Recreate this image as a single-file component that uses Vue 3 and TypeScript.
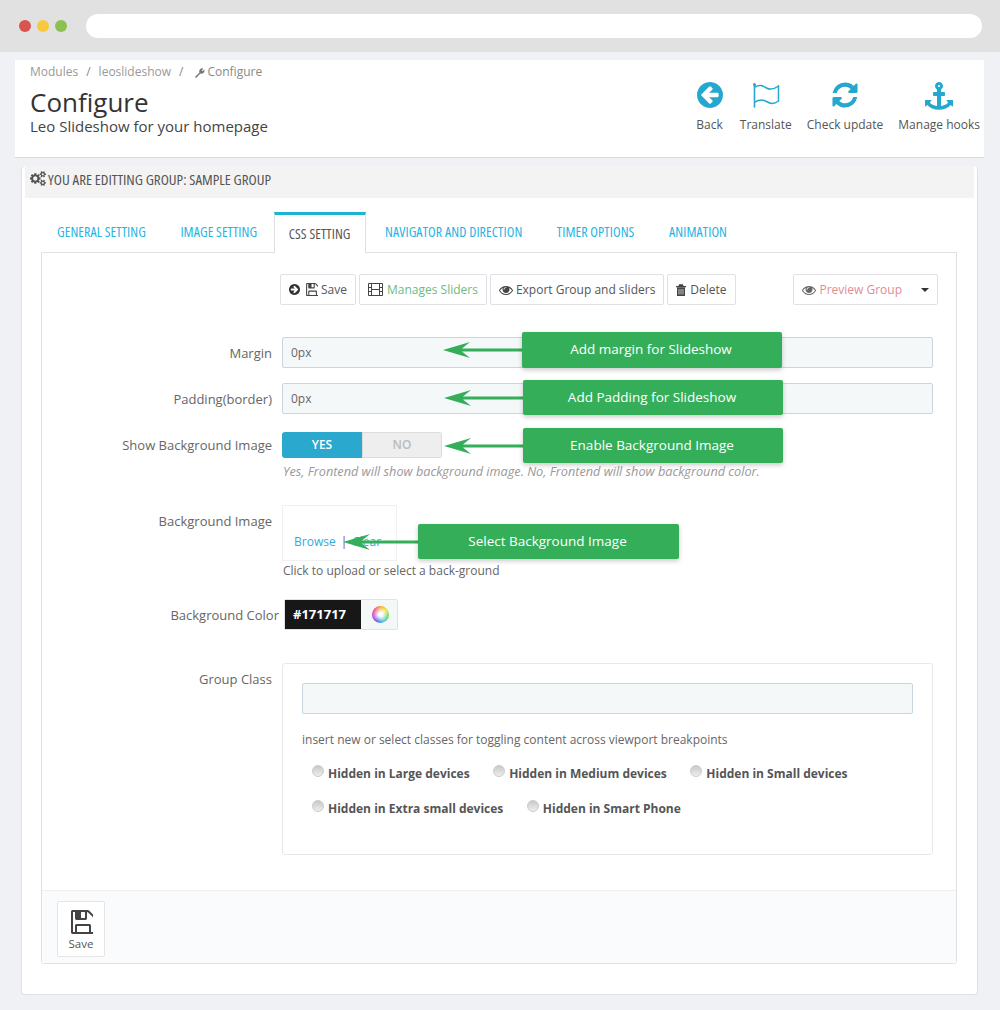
<script setup lang="ts">
interface Callout { text: string; x: number; y: number; w: number; h: number; tip: number }
const tabs = ['GENERAL SETTING', 'IMAGE SETTING', 'CSS SETTING', 'NAVIGATOR AND DIRECTION', 'TIMER OPTIONS', 'ANIMATION']
const callouts: Callout[] = [
  { text: 'Add margin for Slideshow', x: 522, y: 332, w: 260, h: 36, tip: 443 },
  { text: 'Add Padding for Slideshow', x: 523, y: 380, w: 260, h: 35, tip: 444 },
  { text: 'Enable Background Image', x: 523, y: 428, w: 260, h: 35, tip: 444 },
  { text: 'Select Background Image', x: 418, y: 524, w: 261, h: 35, tip: 343 },
]
const row1 = ['Hidden in Large devices', 'Hidden in Medium devices', 'Hidden in Small devices']
const row2 = ['Hidden in Extra small devices', 'Hidden in Smart Phone']
const floppy = 'M512 1536h768v-384h-768v384zm896 0h128v-896q0-14-10-38.500t-20-34.500l-281-281q-10-10-34-20t-39-10v416q0 40-28 68t-68 28h-576q-40 0-68-28t-28-68v-416h-128v1280h128v-416q0-40 28-68t68-28h832q40 0 68 28t28 68v416zm-384-928v-320q0-13-9.500-22.500t-22.500-9.500h-192q-13 0-22.500 9.500t-9.500 22.500v320q0 13 9.500 22.500t22.500 9.500h192q13 0 22.500-9.500t9.500-22.500zm640 32v928q0 40-28 68t-68 28h-1344q-40 0-68-28t-28-68v-1344q0-40 28-68t68-28h928q40 0 88 20t76 48l280 280q28 28 48 76t20 88z'
const eye = 'M1664 960q-152-236-381-353 61 104 61 225 0 185-131.500 316.500t-316.500 131.500-316.500-131.500-131.500-316.500q0-121 61-225-229 117-381 353 133 205 333.500 326.500t434.500 121.500 434.500-121.500 333.500-326.500zm-720-384q0-20-14-34t-34-14q-125 0-214.500 89.500t-89.500 214.500q0 20 14 34t34 14 34-14 14-34q0-86 61-147t147-61q20 0 34-14t14-34zm848 384q0 34-20 69-140 230-376.500 368.500t-499.500 138.500-499.500-139-376.500-368q-20-35-20-69t20-69q140-229 376.500-368t499.500-139 499.500 139 376.500 368q20 35 20 69z'
const arrowCircle = 'M1280 960v-128q0-26-19-45t-45-19h-502l189-189q19-19 19-45t-19-45l-91-91q-18-18-45-18t-45 18l-362 362-91 91q-18 18-18 45t18 45l91 91 362 362q18 18 45 18t45-18l91-91q18-18 18-45t-18-45l-189-189h502q26 0 45-19t19-45zm256-64q0 209-103 385.500t-279.500 279.500-385.500 103-385.500-103-279.500-279.500-103-385.500 103-385.500 279.500-279.500 385.500-103 385.500 103 279.500 279.500 103 385.500z'
const refresh = 'M1639 1056q0 5-1 7-64 268-268 434.500t-478 166.500q-146 0-282.500-55t-243.500-157l-129 129q-19 19-45 19t-45-19-19-45v-448q0-26 19-45t45-19h448q26 0 45 19t19 45-19 45l-137 137q71 66 161 102t187 36q134 0 250-65t186-179q11-17 53-117 8-23 30-23h192q13 0 22.500 9.500t9.500 22.500zm25-800v448q0 26-19 45t-45 19h-448q-26 0-45-19t-19-45 19-45l138-138q-148-137-349-137-134 0-250 65t-186 179q-11 17-53 117-8 23-30 23h-199q-13 0-22.500-9.500t-9.500-22.500v-7q65-268 270-434.500t480-166.500q146 0 284 55.500t245 156.500l130-129q19-19 45-19t45 19 19 45z'
const anchor = 'M960 256q0-26-19-45t-45-19-45 19-19 45 19 45 45 19 45-19 19-45zm832 928v352q0 22-20 30-8 2-12 2-12 0-23-9l-93-93q-119 143-318.500 226.500t-429.500 83.500-429.500-83.500-318.500-226.500l-93 93q-9 9-23 9-4 0-12-2-20-8-20-30v-352q0-14 9-23t23-9h352q22 0 30 20 8 19-7 35l-100 100q67 91 189.500 153.500t271.500 82.500v-647h-192q-26 0-45-19t-19-45v-128q0-26 19-45t45-19h192v-163q-58-34-93-92.500t-35-128.500q0-106 75-181t181-75 181 75 75 181q0 70-35 128.500t-93 92.500v163h192q26 0 45 19t19 45v128q0 26-19 45t-45 19h-192v647q149-20 271.500-82.500t189.500-153.500l-100-100q-15-16-7-35 8-20 30-20h352q14 0 23 9t9 23z'
const cogs = 'M832 896q0-106-75-181t-181-75-181 75-75 181 75 181 181 75 181-75 75-181zm768 512q0-52-38-90t-90-38-90 38-38 90q0 53 37.500 90.500t90.500 37.500 90.500-37.500 37.500-90.500zm0-1024q0-52-38-90t-90-38-90 38-38 90q0 53 37.500 90.500t90.500 37.500 90.500-37.500 37.500-90.500zm-384 421v185q0 10-7 19.500t-16 10.500l-155 24q-11 35-32 76 34 48 90 115 7 11 7 20 0 12-7 19-23 30-82.500 89.500t-78.500 59.500q-11 0-21-7l-115-90q-37 19-77 31-11 108-23 155-7 24-30 24h-186q-11 0-20-7.500t-10-17.500l-23-153q-34-10-75-31l-118 89q-7 7-20 7-11 0-21-8-144-133-144-160 0-9 7-19 10-14 41-53t47-61q-23-44-35-82l-152-24q-10-1-17-9.500t-7-19.500v-185q0-10 7-19.500t16-10.500l155-24q11-35 32-76-34-48-90-115-7-11-7-20 0-12 7-20 22-30 82-89t79-59q11 0 21 7l115 90q34-18 77-32 11-108 23-154 7-24 30-24h186q11 0 20 7.500t10 17.500l23 153q34 10 75 31l118-89q8-7 20-7 11 0 21 8 144 133 144 160 0 8-7 19-12 16-42 54t-45 60q23 48 34 82l152 23q10 2 17 10.500t7 19.500zm640 533v140q0 16-149 31-12 27-30 52 51 113 51 138 0 4-4 7-122 71-124 71-8 0-46-47t-52-68q-20 2-30 2t-30-2q-14 21-52 68t-46 47q-2 0-124-71-4-3-4-7 0-25 51-138-18-25-30-52-149-15-149-31v-140q0-16 149-31 13-29 30-52-51-113-51-138 0-4 4-7 4-2 35-20t59-34 30-16q8 0 46 46.500t52 67.500q20-2 30-2t30 2q51-71 92-112l6-2q4 0 124 70 4 3 4 7 0 25-51 138 17 23 30 52 149 15 149 31zm0-1024v140q0 16-149 31-12 27-30 52 51 113 51 138 0 4-4 7-122 71-124 71-8 0-46-47t-52-68q-20 2-30 2t-30-2q-14 21-52 68t-46 47q-2 0-124-71-4-3-4-7 0-25 51-138-18-25-30-52-149-15-149-31v-140q0-16 149-31 13-29 30-52-51-113-51-138 0-4 4-7 4-2 35-20t59-34 30-16q8 0 46 46.500t52 67.500q20-2 30-2t30 2q51-71 92-112l6-2q4 0 124 70 4 3 4 7 0 25-51 138 17 23 30 52 149 15 149 31z'
</script>

<template>
  <div class="page">
    <div class="chrome">
      <span class="dot red"></span><span class="dot yellow"></span><span class="dot green"></span>
      <div class="address"></div>
    </div>

    <header class="head">
      <div class="head-left">
        <div class="crumbs">
          <span>Modules</span><span class="sep">/</span><span>leoslideshow</span><span class="sep">/</span>
          <span class="crumb-last">
            <svg width="11" height="11" viewBox="0 0 12 12"><path d="M1 11 6 6a3.2 3.2 0 0 1 4.3-4.2L8.400 3.700l.9 1 1.900-1.900A3.200 3.200 0 0 1 7 7l-4.700 4.900z" fill="#777"/></svg>
            Configure
          </span>
        </div>
        <h1>Configure</h1>
        <p class="sub">Leo Slideshow for your homepage</p>
      </div>
      <nav class="actions">
        <a class="act back">
          <svg width="26" height="26" viewBox="0 128 1536 1536"><path :d="arrowCircle" fill="#25a7cf"/></svg>
          <span>Back</span>
        </a>
        <a class="act translate">
          <svg width="28" height="26" viewBox="0 0 28 26"><circle cx="2.500" cy="2.500" r="1.500" fill="#25a7cf"/><path d="M2.500 3v22" stroke="#25a7cf" stroke-width="1.600" stroke-linecap="round" fill="none"/><path d="M3 5C8 2 11 4 14.500 6S21 8 26.500 4V19C21 23 18 21.500 14.500 19.500S8 17 3 20" stroke="#25a7cf" stroke-width="1.500" fill="none"/></svg>
          <span>Translate</span>
        </a>
        <a class="act update">
          <svg width="30" height="26" viewBox="100 100 1592 1592"><path :d="refresh" fill="#25a7cf"/></svg>
          <span>Check update</span>
        </a>
        <a class="act hooks">
          <svg width="30" height="28" viewBox="0 0 1792 1792"><path :d="anchor" fill="#25a7cf"/></svg>
          <span>Manage hooks</span>
        </a>
      </nav>
    </header>

    <section class="panel">
      <div class="panel-head">
        <svg width="17" height="15" viewBox="0 0 1920 1792"><path :d="cogs" fill="#555"/></svg>
        <span class="cond big">YOU ARE EDITTING GROUP: SAMPLE GROUP</span>
      </div>

      <ul class="tabs">
        <li v-for="(t, i) in tabs" :key="t" class="tab" :class="{ active: i === 2 }"><span class="cond">{{ t }}</span></li>
      </ul>

      <div class="box">
        <div class="toolbar">
          <button class="btn">
            <svg class="flip" width="11" height="11" viewBox="0 128 1536 1536"><path :d="arrowCircle" fill="#333"/></svg>
            <svg class="ml" width="13" height="13" viewBox="0 128 1536 1536"><path :d="floppy" fill="#444"/></svg>
            Save
          </button>
          <button class="btn green-t">
            <svg width="15" height="13" viewBox="0 0 15 13"><path d="M.5.500h14v12H.500zM3.500.500v12M11.500.500v12M.5 4.500h3M.5 8.500h3M11.500 4.500h3M11.500 8.500h3M3.500 6.500h8" fill="none" stroke="#444" stroke-width="1"/></svg>
            Manages Sliders
          </button>
          <button class="btn">
            <svg width="14" height="14" viewBox="0 0 1792 1792"><path :d="eye" fill="#444"/></svg>
            Export Group and sliders
          </button>
          <button class="btn del">
            <svg width="10" height="12" viewBox="0 0 10 12"><path d="M0 2h10v1.200H0zM3 .3h4l.5 1.700h-5zM1 3.500h8V12H1z" fill="#444"/><path d="M3 5v5.500M5 5v5.500M7 5v5.500" stroke="#fff" stroke-width=".7"/></svg>
            Delete
          </button>
          <button class="btn preview">
            <svg width="14" height="14" viewBox="0 0 1792 1792"><path :d="eye" fill="#666"/></svg>
            <span class="pink">Preview Group</span>
            <span class="caret"></span>
          </button>
        </div>

        <div class="row r-margin">
          <label>Margin</label>
          <div class="input">0px</div>
        </div>
        <div class="row r-padding">
          <label>Padding(border)</label>
          <div class="input">0px</div>
        </div>
        <div class="row r-switch">
          <label>Show Background Image</label>
          <div>
            <div class="switch"><span class="yes">YES</span><span class="no">NO</span></div>
            <p class="help">Yes, Frontend will show background image. No, Frontend will show background color.</p>
          </div>
        </div>
        <div class="row r-image">
          <label>Background Image</label>
          <div>
            <div class="image-box"><a>Browse</a><i>|</i><a>Clear</a></div>
            <p class="upload">Click to upload or select a back-ground</p>
          </div>
        </div>
        <div class="row r-color">
          <label>Background Color</label>
          <div class="color">
            <span class="swatch">#171717</span>
            <span class="wheel-cell"><span class="wheel"></span></span>
          </div>
        </div>
        <div class="row r-class">
          <label>Group Class</label>
          <div class="class-box">
            <div class="class-input"></div>
            <p class="insert">insert new or select classes for toggling content across viewport breakpoints</p>
            <div class="radios first">
              <span v-for="r in row1" :key="r" class="radio"><span class="circle"></span>{{ r }}</span>
            </div>
            <div class="radios">
              <span v-for="r in row2" :key="r" class="radio"><span class="circle"></span>{{ r }}</span>
            </div>
          </div>
        </div>

        <footer class="foot">
          <button class="save">
            <svg width="24" height="24" viewBox="0 128 1536 1536"><path :d="floppy" fill="#444"/></svg>
            <span>Save</span>
          </button>
        </footer>
      </div>
    </section>

    <div v-for="c in callouts" :key="c.text" class="callout-wrap">
      <div class="callout" :style="{ left: c.x + 'px', top: c.y + 'px', width: c.w + 'px', height: c.h + 'px' }">{{ c.text }}</div>
      <svg class="arrow" :style="{ left: c.tip + 'px', top: c.y + c.h / 2 - 9 + 'px', width: c.x - c.tip + 'px' }" height="18" :viewBox="`0 0 ${c.x - c.tip} 18`">
        <path :d="`M0 9 L27 1 L19 7.500 H${c.x - c.tip} V10.500 H19 L27 17 Z`" fill="#35ae5a"/>
      </svg>
    </div>
  </div>
</template>

<style>
html, body { margin: 0; background: #eff1f4; }
</style>

<style scoped>
.page { position: relative; width: 1000px; height: 1010px; overflow: hidden; background: #eff1f4; font-family: "Open Sans", sans-serif; font-size: 13px; color: #666; }
.chrome { height: 52px; background: #e1e1e1; display: flex; align-items: center; padding-left: 19px; box-sizing: border-box; }
.dot { width: 12px; height: 12px; border-radius: 50%; margin-right: 6px; }
.red { background: #d9534f; } .yellow { background: #f7ca3e; } .green { background: #8cc152; }
.address { width: 896px; height: 24px; background: #fff; border-radius: 12px; margin-left: 13px; }

.head { margin: 8px 16px 0 15px; height: 97px; background: #fff; border-bottom: 1px solid #d9dbde; display: flex; justify-content: space-between; }
.head-left { padding: 4px 0 0 15px; }
.crumbs { font-size: 12px; color: #999; line-height: 16px; display: flex; }
.crumbs .sep { margin: 0 8px; color: #888; }
.crumb-last { margin-left: 3px; display: inline-flex; align-items: center; gap: 2px; color: #888; }
h1 { margin: 8px 0 0; font-size: 26px; font-weight: 400; color: #333; line-height: 28px; }
.sub { margin: 0; font-size: 15px; color: #444; line-height: 20px; }
.actions { display: flex; padding: 22px 4px 0 0; }
.act { display: flex; flex-direction: column; align-items: center; color: #555; font-size: 12px; height: 51px; justify-content: space-between; }
.act span { line-height: 16px; }
.back { margin-right: 17px; }
.translate { margin-right: 15px; }
.update { margin-right: 15px; }

.panel { margin: 8px 22px 0 21px; height: 829px; background: #fff; border: 1px solid #dfe1e4; border-top: 0; border-radius: 4px; box-sizing: border-box; padding: 0 3px; position: relative; }
.panel-head { height: 32px; background: #f3f3f3; display: flex; align-items: center; gap: 1px; padding: 0 0 7px 5px; box-sizing: border-box; color: #555; }
.cond { font-family: "Open Sans", sans-serif; font-stretch: 75%; font-size: 14px; letter-spacing: .1px; }
.cond.big { font-size: 15px; letter-spacing: 0; }
.tabs { list-style: none; margin: 14px 0 0 16px; padding: 0; display: flex; height: 41px; position: relative; z-index: 1; }
.tab { padding: 0 15px 0 16px; margin-right: 3.500px; line-height: 39px; color: #25b4e3; white-space: nowrap; }
.tab.active { background: #fff; color: #555; border: 1px solid #dfe1e4; border-top: 3px solid #1bb5d3; border-bottom: 0; height: 41px; line-height: 37px; box-sizing: border-box; padding: 0 14px; margin-left: -2px; }
.box { margin: -1px 0 0 16px; width: 916px; height: 712px; border: 1px solid #dfe1e4; box-sizing: border-box; border-radius: 0 0 3px 3px; position: relative; }

.toolbar { display: flex; gap: 3px; padding: 21px 18px 0 238px; height: 53px; box-sizing: border-box; }
.btn { height: 31px; border: 1px solid #dfe1e4; background: #fff; border-radius: 2px; padding: 0 8px; font: 12px "Open Sans", sans-serif; color: #555; display: inline-flex; align-items: center; gap: 3px; white-space: nowrap; }
.btn .ml { margin-left: 2px; }
.flip { transform: scaleX(-1); }
.green-t { color: #6dbb7f; gap: 4px; }
.del { padding: 0 8px; gap: 4px; }
.preview { margin-left: auto; padding: 0 8px; }
.pink { color: #e58a97; margin-right: 16px; }
.caret { border: 4px solid transparent; border-top-color: #333; border-bottom: 0; }

.row { display: grid; grid-template-columns: 230px 1fr; column-gap: 10px; }
.row label { text-align: right; line-height: 31px; height: 26px; font-size: 13px; color: #666; }
.r-margin { margin-top: 31px; padding-right: 23px; }
.r-padding { margin-top: 15px; padding-right: 23px; }
.r-margin label, .r-padding label, .r-color label { line-height: 33px; }
.r-switch { margin-top: 18px; }
.r-switch label { line-height: 26px; }
.r-image { margin-top: 26px; }
.r-image label { line-height: 32px; }
.r-color { margin-top: 19px; }
.r-color label { margin-right: -7px; }
.r-class { margin-top: 33px; padding-right: 23px; }
.r-class label { line-height: 32px; }
.input { height: 31px; border: 1px solid #c8d7dd; background: #f5f8f9; box-sizing: border-box; line-height: 29px; padding-left: 8px; font-size: 12px; color: #666; border-radius: 2px; }
.switch { width: 160px; height: 26px; display: flex; font-size: 12px; font-weight: 600; line-height: 26px; text-align: center; border-radius: 3px; overflow: hidden; }
.yes { width: 80px; background: #2aa8cd; color: #fff; }
.no { width: 80px; background: #eee; color: #bbb; box-shadow: inset 0 0 0 1px #dcdcdc; }
.help { margin: 5px 0 0 1px; font-size: 12.700px; font-style: italic; color: #999; line-height: 16px; white-space: nowrap; }
.image-box { width: 115px; height: 56px; border: 1px solid #f0f0f0; box-sizing: border-box; padding: 27px 0 0 11px; font-size: 12px; line-height: 18px; color: #33a9dd; display: flex; gap: 5px; }
.image-box i { font-style: normal; color: #8a4a6a; }
.upload { margin: 1px 0 0 1px; font-size: 12px; line-height: 18px; color: #666; white-space: nowrap; }
.color { display: flex; width: 114px; height: 31px; margin-left: 2px; border: 1px solid #dfe3e6; border-radius: 2px; box-sizing: border-box; }
.swatch { width: 76px; background: #171717; color: #fff; font-size: 13px; font-weight: 700; line-height: 29px; padding-left: 8px; box-sizing: border-box; }
.wheel-cell { flex: 1; background: #f5f8f9; display: flex; align-items: center; justify-content: center; padding-left: 2px; }
.wheel { width: 17px; height: 17px; border-radius: 50%; background: radial-gradient(circle, #fff 0 15%, transparent 70%), conic-gradient(#f5a623, #e8e337, #5fd35f, #35c7d8, #3f5de0, #c13fd8, #f0437a, #f5a623); }
.class-box { height: 192px; border: 1px solid #e6e9ec; border-radius: 3px; box-sizing: border-box; padding: 19px 19px 0; }
.class-input { height: 31px; background: #f5f8f9; border: 1px solid #c8d7dd; box-sizing: border-box; border-radius: 2px; }
.insert { margin: 17px 0 0; font-size: 12px; line-height: 18px; color: #666; white-space: nowrap; }
.radios { display: flex; margin: 17px 0 0 10px; gap: 23.500px; font-size: 12px; font-weight: 700; color: #555; line-height: 18px; }
.radios.first { margin-top: 16px; }
.radio { position: relative; padding-left: 16px; white-space: nowrap; }
.circle { position: absolute; left: 0; top: 0; width: 12px; height: 12px; border-radius: 50%; background: linear-gradient(#c8c8c8, #eee); border: 1px solid #ccc; box-sizing: border-box; }
.foot { position: absolute; left: 0; right: 0; bottom: 0; height: 73px; background: #fafbfc; border-top: 1px solid #eee; box-sizing: border-box; padding: 10px 0 0 15px; }
.save { width: 48px; height: 56px; background: #fff; border: 1px solid #e5e5e5; border-radius: 2px; padding: 8px 0 0; display: flex; flex-direction: column; align-items: center; gap: 2px; font: 11.500px "Open Sans", sans-serif; color: #555; box-sizing: border-box; }

.callout { position: absolute; background: #35ae5a; color: #fff; font-size: 13.500px; display: flex; align-items: center; justify-content: center; border-radius: 2px; box-shadow: 0 2px 5px rgba(0,0,0,.22); z-index: 3; box-sizing: border-box; padding: 0 2px 2px 0; }
.arrow { position: absolute; z-index: 2; }
</style>
